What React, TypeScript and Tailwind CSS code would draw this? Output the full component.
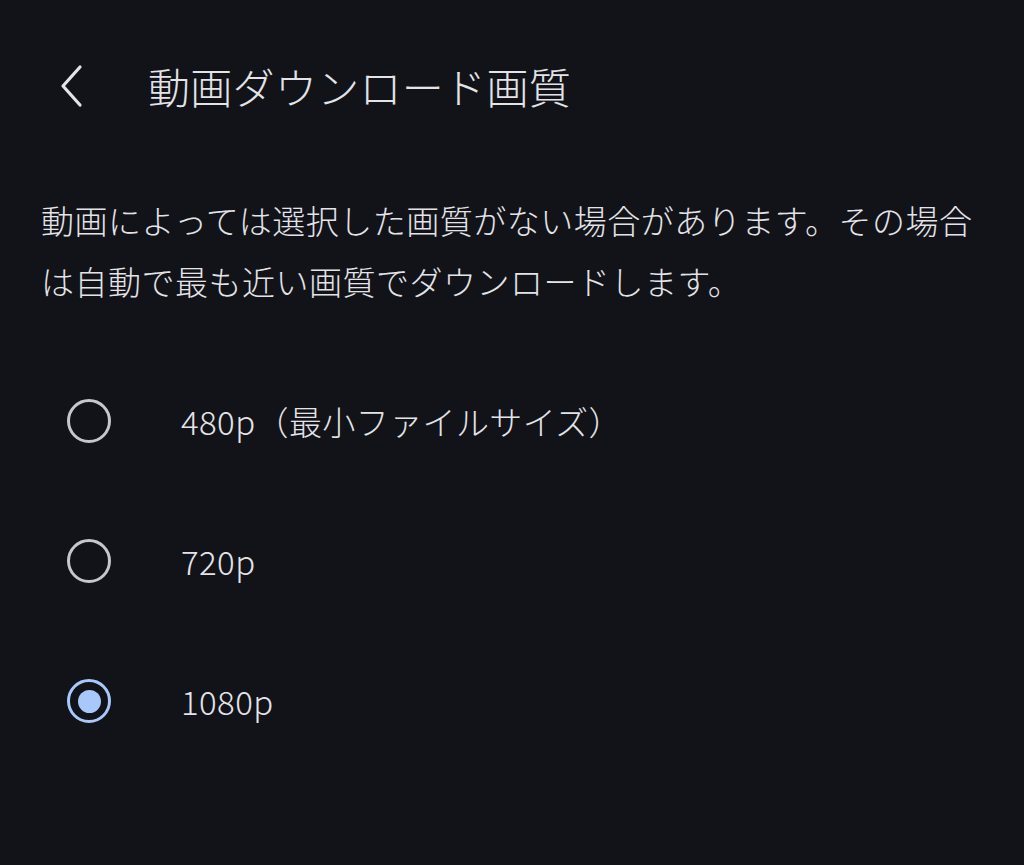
import { useState } from 'react';

const options = ['480p（最小ファイルサイズ）', '720p', '1080p'];

export default function App() {
  const [selected, setSelected] = useState(2);

  return (
    <main
      className="min-h-screen w-full bg-[#111318] font-light text-[#e3e3e8]"
      style={{ fontFamily: '"Noto Sans CJK JP", "Noto Sans", sans-serif' }}
    >
      {/* Top bar */}
      <header className="flex h-[112px] items-center pt-[30px] box-content">
        <button className="ml-[50px] flex h-12 w-10 items-center justify-center">
          <svg width="28" height="44" viewBox="0 0 28 44" fill="none">
            <path d="M24 3 L7 22 L24 41" stroke="#e3e3e8" strokeWidth="3.2" strokeLinecap="round" strokeLinejoin="round" />
          </svg>
        </button>
        <h1 className="ml-[58px] text-[42px] leading-none tracking-[0.3px]">動画ダウンロード画質</h1>
      </header>

      <p className="mt-[48px] px-[41px] text-[33px] leading-[61px] tracking-[0.5px]">
        動画によっては選択した画質がない場合があります。その場合は自動で最も近い画質でダウンロードします。
      </p>

      <div className="mt-[39px] flex flex-col">
        {options.map((label, i) => (
          <button
            key={label}
            onClick={() => setSelected(i)}
            className="flex h-[140px] items-center pl-[67px] text-left"
          >
            {selected === i ? (
              <span className="flex h-[44px] w-[44px] items-center justify-center rounded-full border-[3px] border-[#a8c7fa]">
                <span className="h-[23px] w-[23px] rounded-full bg-[#a8c7fa]" />
              </span>
            ) : (
              <span className="h-[44px] w-[44px] rounded-full border-[3px] border-[#c6c6cc]" />
            )}
            <span className="ml-[70px] text-[33px] leading-none tracking-[0.4px]">{label}</span>
          </button>
        ))}
      </div>
    </main>
  );
}
